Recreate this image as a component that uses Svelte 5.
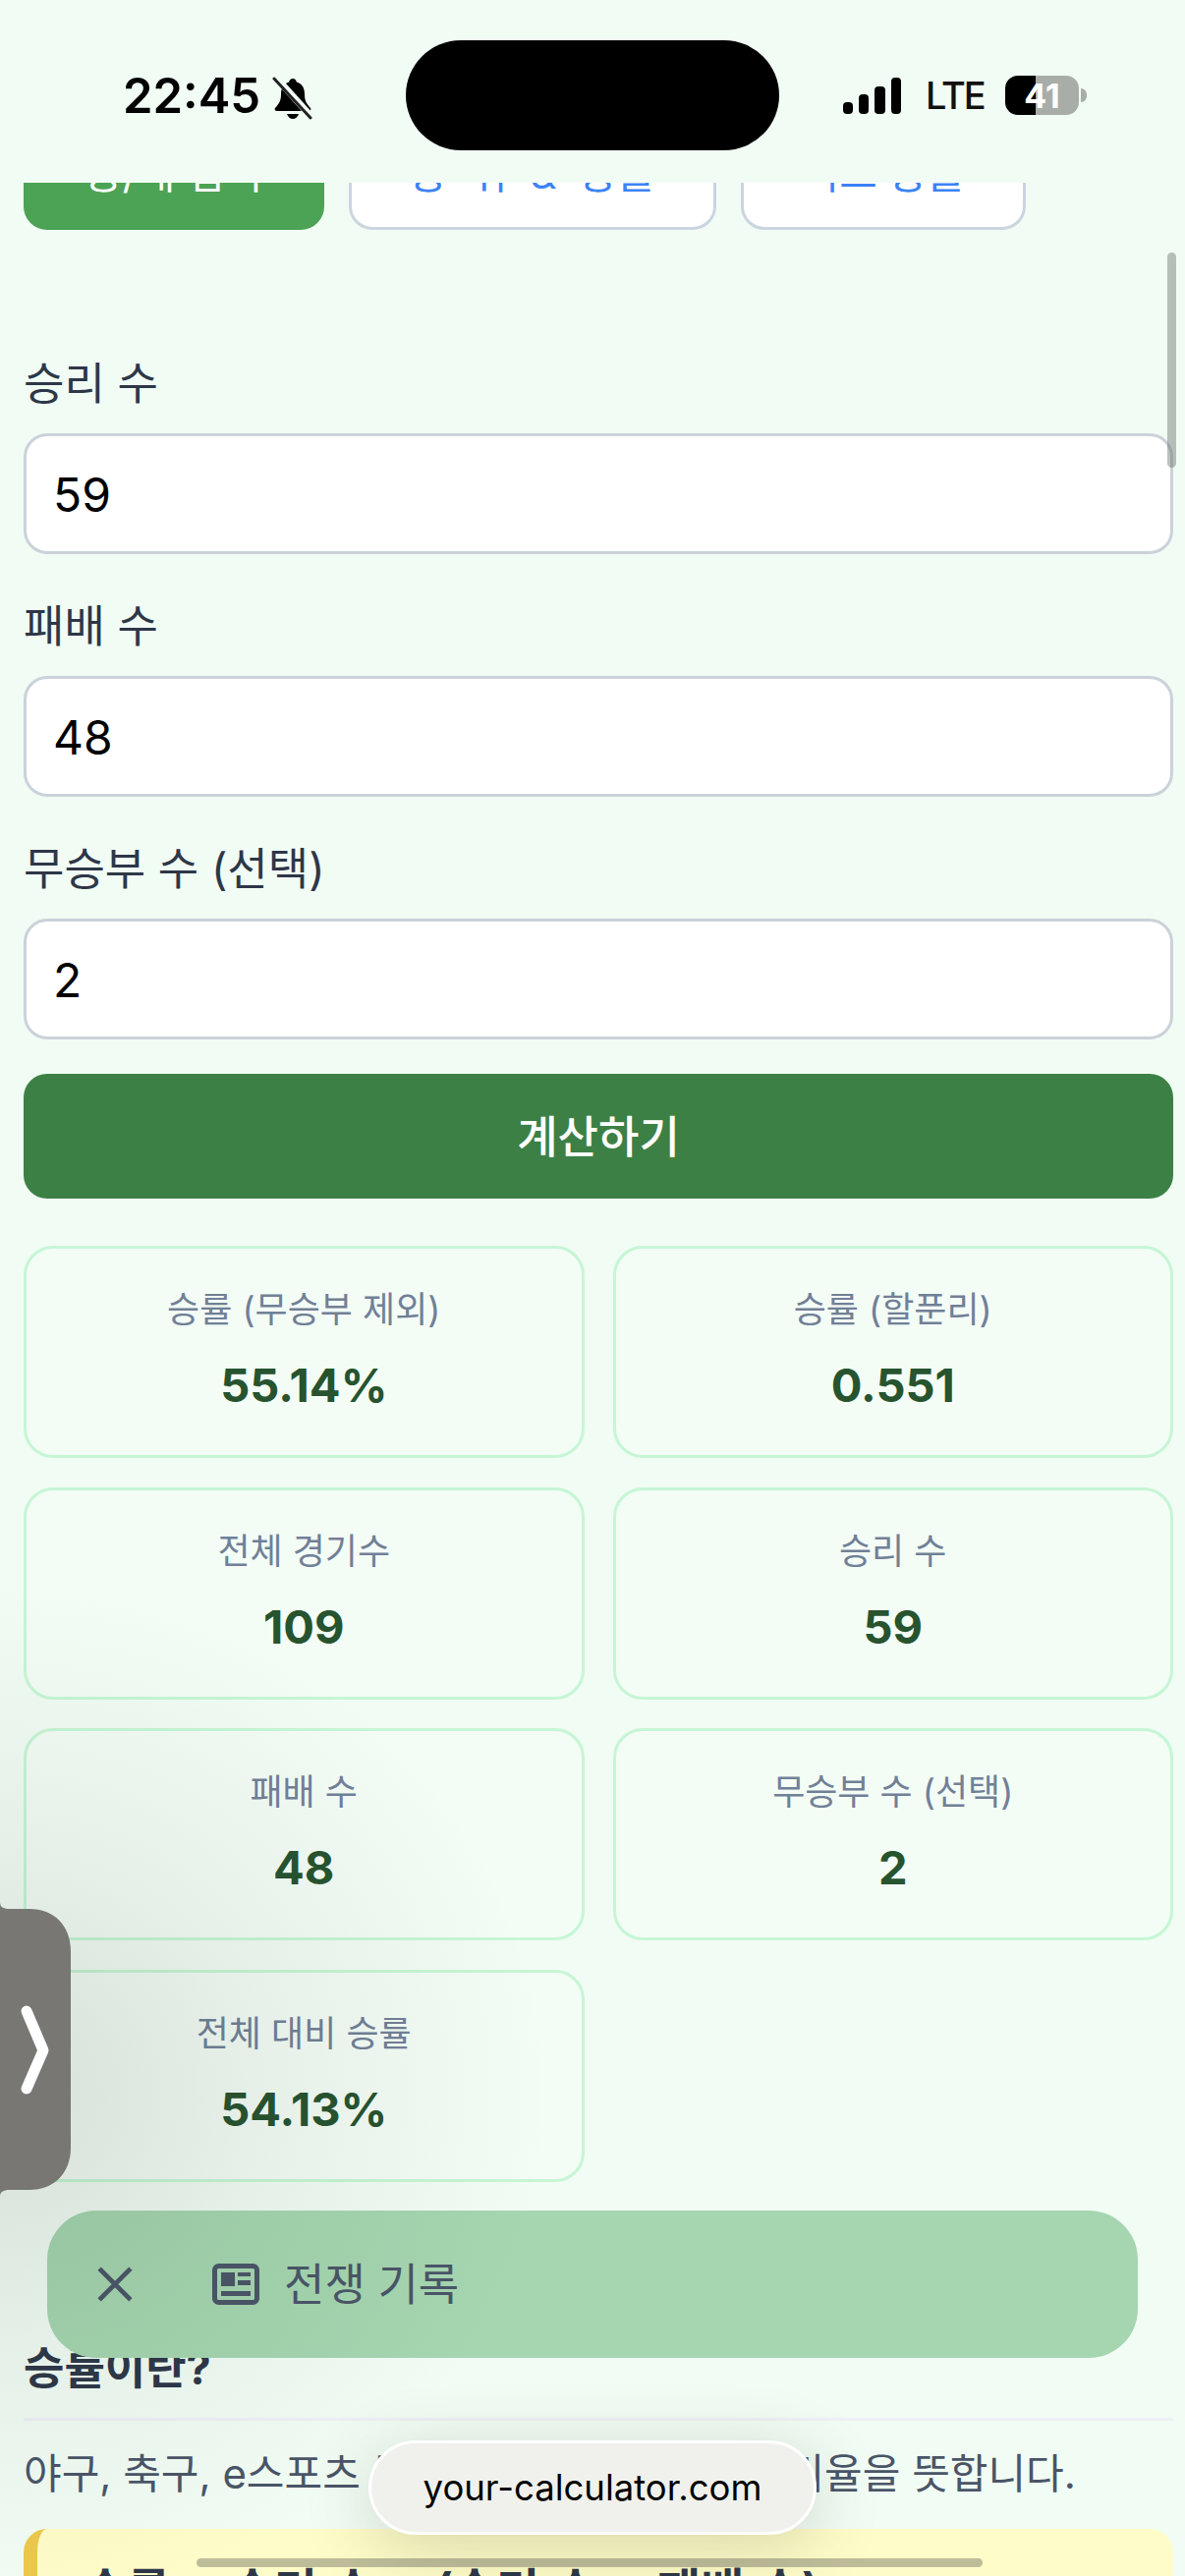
<script>
	const fields = [
		{ label: '승리 수', value: '59' },
		{ label: '패배 수', value: '48' },
		{ label: '무승부 수 (선택)', value: '2' },
	];

	const results = [
		{ label: '승률 (무승부 제외)', value: '55.14%' },
		{ label: '승률 (할푼리)', value: '0.551' },
		{ label: '전체 경기수', value: '109' },
		{ label: '승리 수', value: '59' },
		{ label: '패배 수', value: '48' },
		{ label: '무승부 수 (선택)', value: '2' },
		{ label: '전체 대비 승률', value: '54.13%' },
	];
</script>

<div class="phone">
	<header class="status">
		<div class="status-left">
			<span class="time">22:45</span>
			<svg class="bell" viewBox="0 0 42 44" aria-hidden="true">
				<path d="M21 2c-2 0-3.500 1.500-3.800 3.500C11.500 7 9 11.500 9 18c0 6-1.500 9-6 14-1 1.500 0 3 2 3h32c2 0 3-1.500 2-3-4.500-5-6-8-6-14 0-6.500-2.500-11-8.200-12.500C24.500 3.500 23 2 21 2z" fill="#000"/>
				<path d="M15 38c1 3 3.500 5 6 5s5-2 6-5z" fill="#000"/>
				<path d="M3 0L41 42" stroke="#f1fcf4" stroke-width="7"/>
				<path d="M2 2L39 42" stroke="#222" stroke-width="3" stroke-linecap="round"/>
			</svg>
		</div>
		<div class="island"></div>
		<div class="status-right">
			<svg class="signal" viewBox="0 0 59 37" aria-hidden="true">
				<rect x="0" y="25" width="10" height="12" rx="4" />
				<rect x="16" y="17" width="10" height="20" rx="4" />
				<rect x="32" y="9" width="11" height="28" rx="4" />
				<rect x="49" y="0" width="10" height="37" rx="4" />
			</svg>
			<span class="lte">LTE</span>
			<div class="battery"><span>41</span></div>
			<div class="battery-nub"></div>
		</div>
	</header>

	<main class="content">
		<nav class="tabs">
			<button class="tab active">승/패 입력</button>
			<button class="tab wide">승 위 &amp; 승률</button>
			<button class="tab">리그 승률</button>
		</nav>

		<form class="form">
			{#each fields as field}
				<div class="field">
					<label for={field.label}>{field.label}</label>
					<input id={field.label} value={field.value} />
				</div>
			{/each}
			<button type="button" class="submit">계산하기</button>
		</form>

		<section class="results">
			{#each results as item}
				<div class="card">
					<div class="card-label">{item.label}</div>
					<div class="card-value">{item.value}</div>
				</div>
			{/each}
		</section>

		<article class="info">
			<h2>승률이란?</h2>
			<p>야구, 축구, e스포츠 등에서 전체경기 중 이긴비율을 뜻합니다.</p>
			<div class="formula">승률 = 승리 수 ÷ (승리 수 + 패배 수)</div>
		</article>
	</main>

	<div class="scrollbar"></div>

	<div class="history">
		<svg class="close" viewBox="0 0 34 34" aria-hidden="true">
			<path d="M2 2L32 32M32 2L2 32" stroke="#4a5568" stroke-width="4.500" fill="none" />
		</svg>
		<svg class="news" viewBox="0 0 48 42" aria-hidden="true">
			<rect x="2.500" y="2.500" width="43" height="37" rx="4" fill="none" stroke="#4a5568" stroke-width="5" />
			<rect x="9" y="9" width="14" height="14" fill="#4a5568" />
			<rect x="26" y="9" width="13" height="4" fill="#4a5568" />
			<rect x="26" y="17" width="13" height="5" fill="#4a5568" />
			<rect x="9" y="28" width="30" height="5" fill="#4a5568" />
		</svg>
		<span>전쟁 기록</span>
	</div>

	<div class="shade"></div>

	<svg class="handle" viewBox="0 0 72 300" aria-hidden="true">
		<path d="M0 0C0 5 3 7 10 7H30C55 7 72 24 72 50V250C72 276 55 293 30 293H10C3 293 0 295 0 300z" fill="#787773" />
		<path d="M27 111L44 151L27 190" fill="none" stroke="#fff" stroke-width="11" stroke-linecap="round" stroke-linejoin="round" />
	</svg>

	<div class="url">your-calculator.com</div>
	<div class="home"></div>
</div>

<style>
	:global(body) {
		background: #f1fcf4;
	}

	.phone {
		position: relative;
		width: 1206px;
		height: 2622px;
		overflow: hidden;
		background: #f1fcf4;
		font-family: Inter, 'Noto Sans CJK KR', sans-serif;
		color: #2d3748;
	}

	.status {
		position: relative;
		z-index: 2;
		height: 186px;
		background: #f1fcf4;
		display: grid;
		grid-template-columns: 413px 380px 1fr;
	}

	.status-left {
		display: flex;
		align-items: flex-start;
		gap: 12px;
		padding: 68px 0 0 125px;
	}

	.time {
		font-size: 49px;
		line-height: 60px;
		font-weight: 600;
		color: #000;
	}

	.bell {
		width: 42px;
		height: 44px;
		margin-top: 10px;
	}

	.island {
		margin-top: 41px;
		height: 112px;
		background: #000;
		border-radius: 56px;
	}

	.status-right {
		display: flex;
		align-items: flex-start;
		padding: 77px 0 0 65px;
	}

	.signal {
		flex: none;
		width: 59px;
		height: 37px;
		margin-top: 2px;
		fill: #000;
	}

	.lte {
		flex: none;
		width: 58px;
		margin-left: 25px;
		font-size: 38px;
		line-height: 40px;
		font-weight: 500;
		color: #111;
		letter-spacing: -2px;
	}

	.battery {
		flex: none;
		width: 75px;
		height: 40px;
		margin-left: 23px;
		border-radius: 13px;
		background: linear-gradient(90deg, #000 41%, #a9ada8 41%);
		display: flex;
		align-items: center;
		justify-content: center;
		color: #fff;
		font-size: 34px;
		font-weight: 700;
	}

	.battery-nub {
		flex: none;
		width: 6px;
		height: 14px;
		margin: 13px 0 0 2px;
		background: #a9ada8;
		border-radius: 0 6px 6px 0;
	}

	.tabs {
		display: flex;
		gap: 25px;
		margin: -66px 0 0;
		padding: 0 24px;
	}

	.tab {
		height: 114px;
		padding: 0 59px 8px;
		font: inherit;
		font-size: 42px;
		border: 3px solid #cbd5e0;
		border-radius: 24px;
		background: #fff;
		color: #3b82f6;
		white-space: nowrap;
	}

	.tab.wide {
		word-spacing: 11px;
	}

	.tab.active {
		background: #4da355;
		border-color: #4da355;
		color: #fff;
	}

	.form {
		display: flex;
		flex-direction: column;
		padding: 127px 12px 0 24px;
	}

	.field {
		display: flex;
		flex-direction: column;
		margin-bottom: 44px;
	}

	.field:last-of-type {
		margin-bottom: 35px;
	}

	label {
		height: 60px;
		margin-bottom: 20px;
		font-size: 45px;
		line-height: 60px;
		color: #2d3748;
	}

	input {
		height: 123px;
		box-sizing: border-box;
		padding: 2px 27px 0;
		border: 3px solid #cbd2d9;
		border-radius: 24px;
		background: #fff;
		font: inherit;
		font-size: 48px;
		color: #000;
		outline: none;
	}

	.submit {
		height: 127px;
		padding-bottom: 6px;
		border: none;
		border-radius: 24px;
		background: #3c8045;
		color: #fff;
		font: inherit;
		font-size: 45px;
		font-weight: 500;
	}

	.results {
		display: grid;
		grid-template-columns: 1fr 1fr;
		grid-auto-rows: 216px;
		gap: 29.500px 29px;
		margin-top: 48px;
		padding: 0 12px 0 24px;
	}

	.card {
		box-sizing: border-box;
		display: flex;
		flex-direction: column;
		align-items: center;
		padding-top: 36px;
		border: 3px solid #c6f6d5;
		border-radius: 30px;
		background: #f3fdf6;
	}

	.card-label {
		height: 52px;
		font-size: 36px;
		line-height: 52px;
		color: #718096;
	}

	.card-value {
		margin-top: 21px;
		font-size: 47px;
		line-height: 60px;
		font-weight: 700;
		color: #27532f;
	}

	.info {
		margin-top: 160px;
		padding: 0 12px 0 24px;
	}

	h2 {
		margin: 0;
		padding-bottom: 20px;
		border-bottom: 3px solid #edf0f5;
		font-size: 45px;
		line-height: 60px;
		font-weight: 700;
		color: #2d3748;
	}

	p {
		margin: 24px 0 0;
		font-size: 42px;
		line-height: 60px;
		color: #4a5568;
		white-space: nowrap;
	}

	.formula {
		margin-top: 26px;
		height: 120px;
		box-sizing: border-box;
		padding: 24px 0 0 47px;
		border-left: 14px solid #ecc94b;
		border-radius: 24px;
		background: #fefcc8;
		font-size: 48px;
		font-weight: 700;
		word-spacing: 3px;
		color: #2d3748;
		white-space: pre;
	}

	.scrollbar {
		position: absolute;
		z-index: 3;
		left: 1188px;
		top: 257px;
		width: 9px;
		height: 219px;
		border-radius: 5px;
		background: rgba(90, 100, 95, 0.4);
	}

	.history {
		position: absolute;
		left: 48px;
		top: 2250px;
		width: 1110px;
		height: 150px;
		box-sizing: border-box;
		display: flex;
		align-items: center;
		padding: 0 0 6px 51px;
		border-radius: 50px;
		background: #a5d6b0;
		color: #4a5568;
		font-size: 45px;
	}

	.close {
		width: 36px;
		height: 36px;
		margin-top: 6px;
	}

	.news {
		width: 48px;
		height: 42px;
		margin: 6px 0 0 81px;
	}

	.history span {
		margin-left: 25px;
	}

	.shade {
		position: absolute;
		left: 0;
		top: 1600px;
		width: 800px;
		height: 1022px;
		pointer-events: none;
		background: radial-gradient(ellipse 560px 520px at 0 530px, rgba(40, 50, 40, 0.14), rgba(40, 50, 40, 0.06) 50%, rgba(40, 50, 40, 0) 100%);
	}

	.handle {
		position: absolute;
		left: 0;
		top: 1936px;
		width: 72px;
		height: 300px;
	}

	.url {
		position: absolute;
		left: 375px;
		top: 2484px;
		width: 456px;
		height: 96px;
		box-sizing: border-box;
		display: flex;
		align-items: center;
		justify-content: center;
		border: 3px solid #fff;
		border-radius: 48px;
		background: #f0f1ec;
		box-shadow: 0 12px 70px rgba(60, 60, 40, 0.2);
		font-size: 36.500px;
		color: #000;
	}

	.home {
		position: absolute;
		left: 200px;
		top: 2604px;
		width: 800px;
		height: 9px;
		border-radius: 5px;
		background: rgba(60, 60, 60, 0.33);
	}
</style>
